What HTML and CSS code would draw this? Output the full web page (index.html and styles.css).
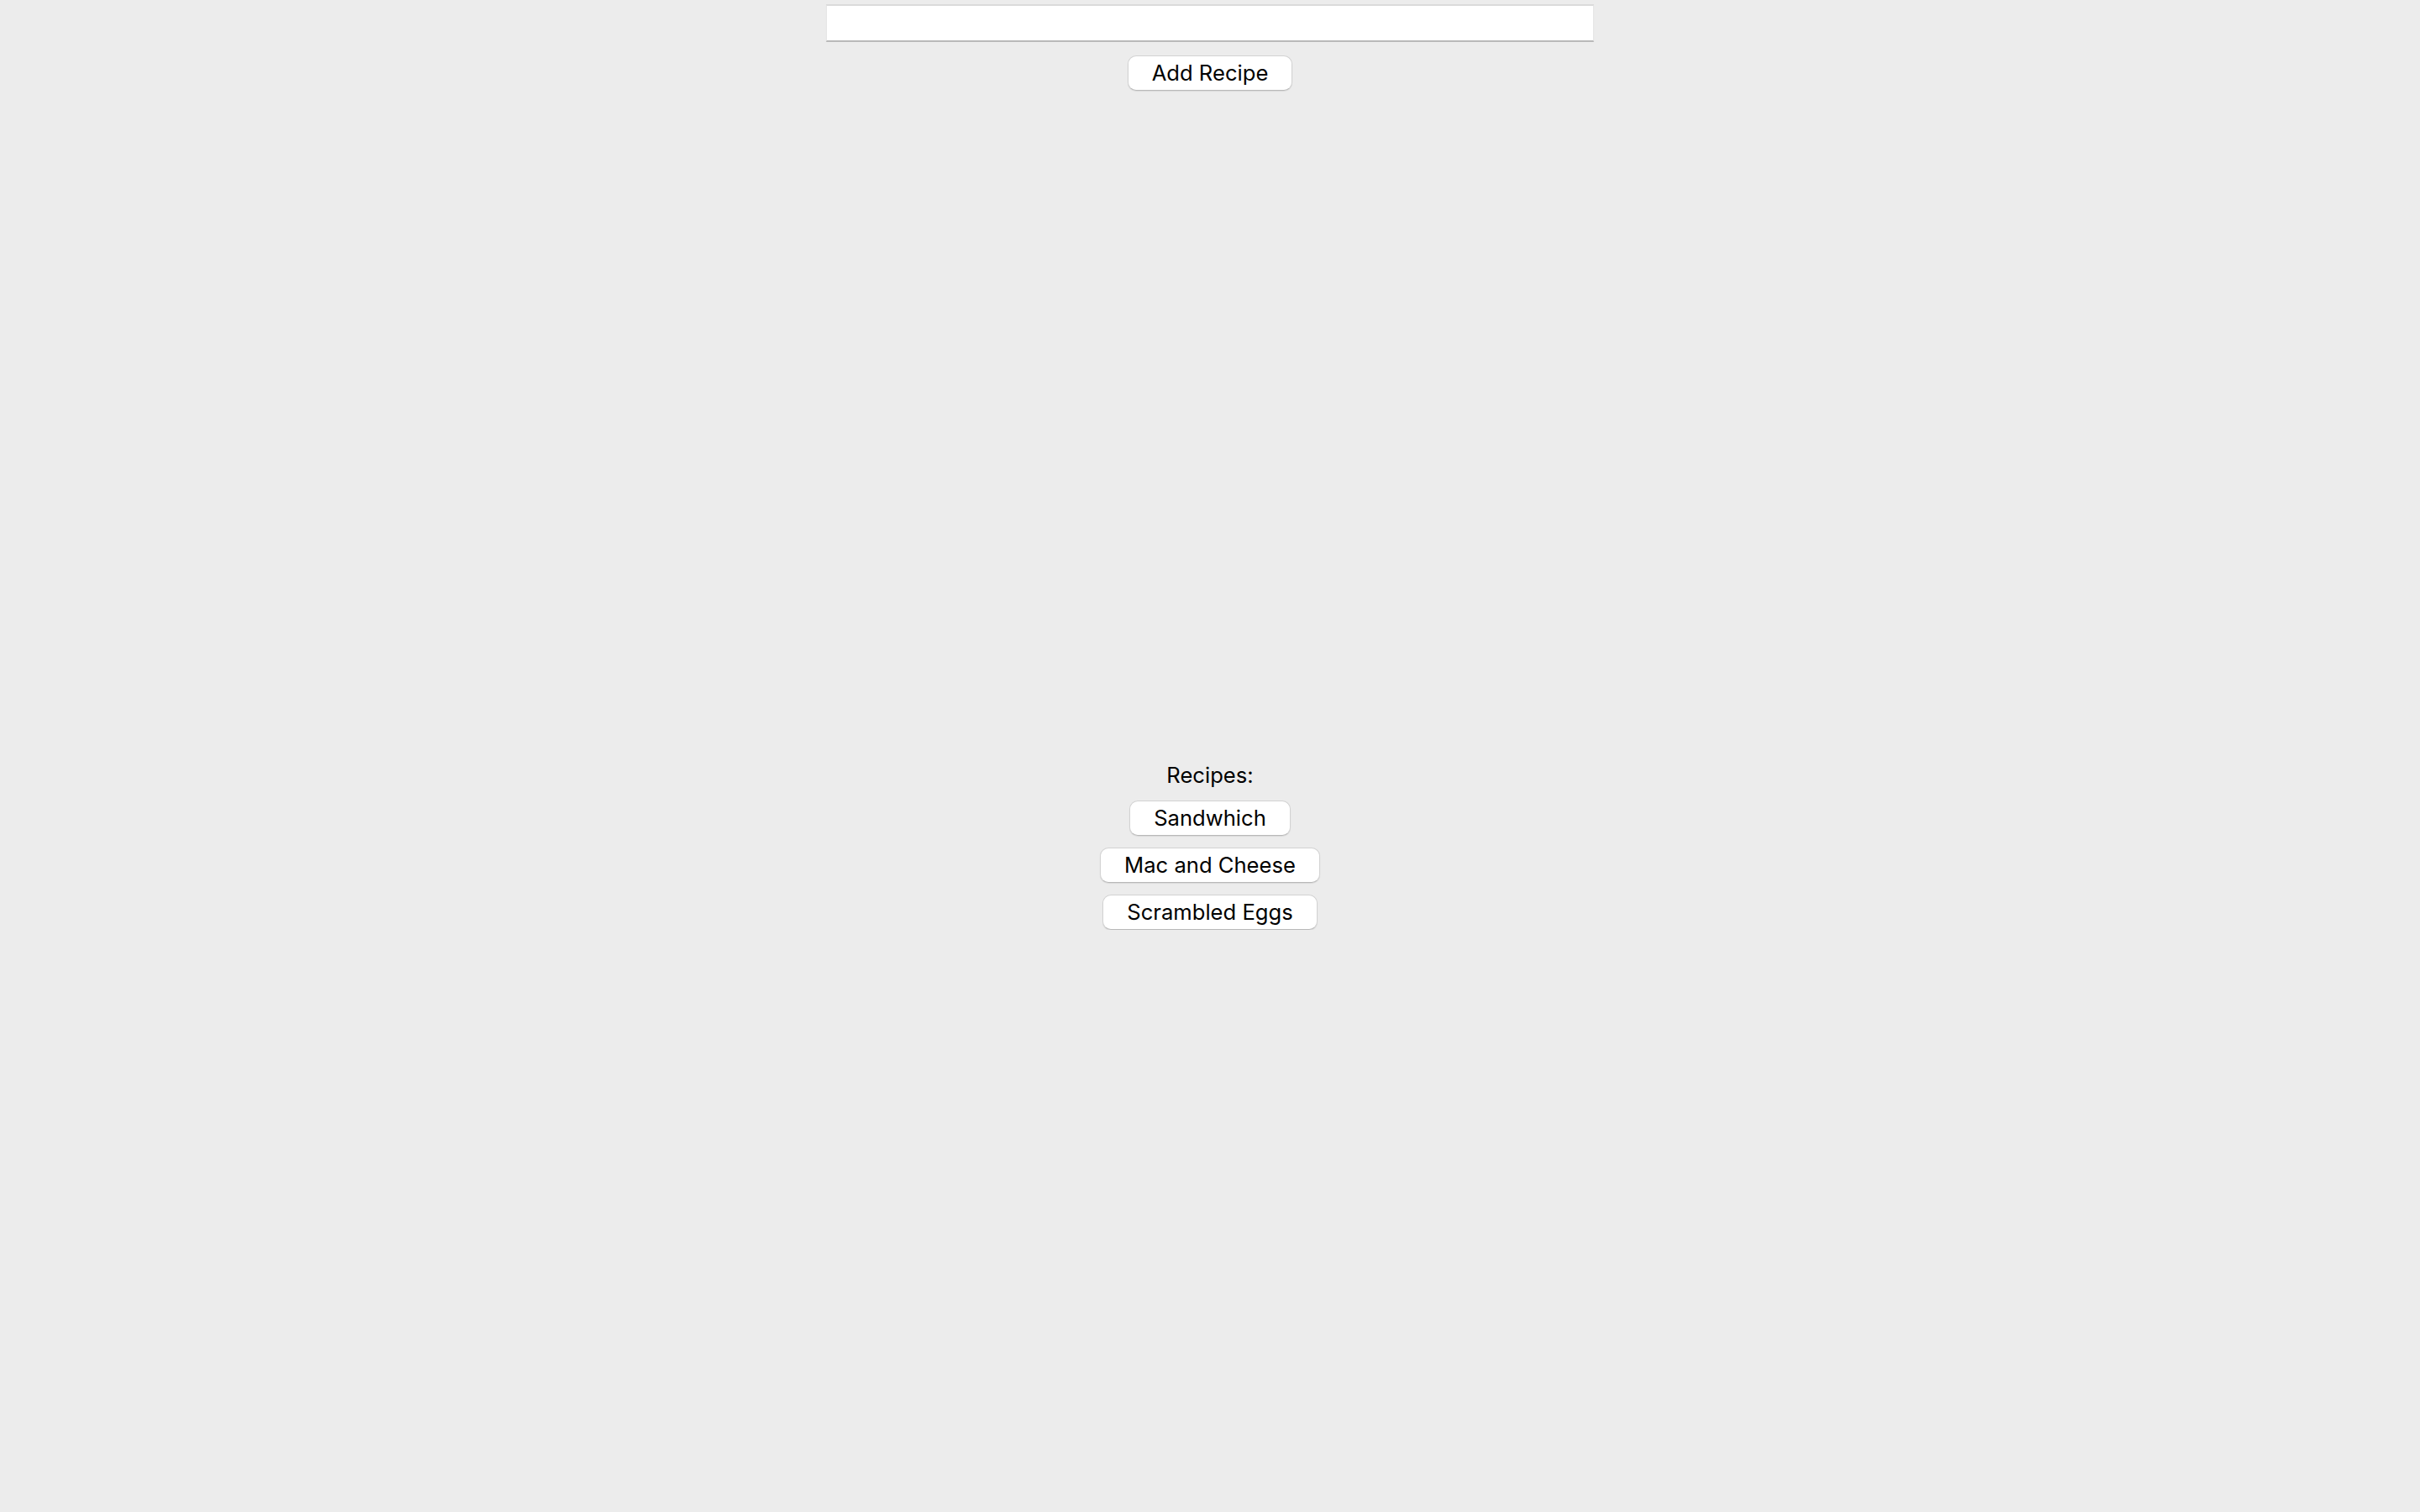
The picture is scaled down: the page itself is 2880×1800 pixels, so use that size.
FILE: index.html
```html
<!DOCTYPE html>
<html>
<head>
<meta charset="utf-8">
<link rel="stylesheet" href="styles.css">
</head>
<body>
<div class="app">
  <input class="recipe-input" type="text">
  <button class="btn add-btn">Add Recipe</button>
  <section class="recipes">
    <div class="recipes-title">Recipes:</div>
    <ul class="recipe-list">
      <li><button class="btn">Sandwhich</button></li>
      <li><button class="btn">Mac and Cheese</button></li>
      <li><button class="btn">Scrambled Eggs</button></li>
    </ul>
  </section>
</div>
</body>
</html>
```

FILE: styles.css
```css
html, body {
  margin: 0;
  padding: 0;
  background: #ececec;
  font-family: Inter, "Noto Sans", sans-serif;
  color: #000;
}
.app {
  display: flex;
  flex-direction: column;
  align-items: center;
}
.recipe-input {
  box-sizing: border-box;
  width: 914px;
  height: 45px;
  margin: 5px 0 0 -1px;
  padding: 0 10px;
  background: #fff;
  border: none;
  border-top: 2px solid #dadada;
  border-left: 1px solid #e4e4e4;
  border-right: 1px solid #e4e4e4;
  border-bottom: 2px solid #b9b9b9;
  outline: none;
  font-family: inherit;
  font-size: 26px;
}
.btn {
  box-sizing: border-box;
  height: 42px;
  padding: 0 28px;
  background: #fff;
  border: 1px solid #d2d2d2;
  border-bottom-color: #b8b8b8;
  border-radius: 10px;
  box-shadow: 0 1px 1px rgba(0,0,0,0.08);
  font-family: inherit;
  font-size: 25.6px;
  color: #000;
  line-height: 40px;
}
.add-btn {
  margin-top: 16px;
}
.recipes {
  margin-top: 799px;
  display: flex;
  flex-direction: column;
  align-items: center;
}
.recipes-title {
  font-size: 25.6px;
  line-height: 32px;
}
.recipe-list {
  list-style: none;
  margin: 14px 0 0;
  padding: 0;
  display: flex;
  flex-direction: column;
  align-items: center;
  gap: 14px;
}
.recipe-list li {
  display: flex;
}
```
